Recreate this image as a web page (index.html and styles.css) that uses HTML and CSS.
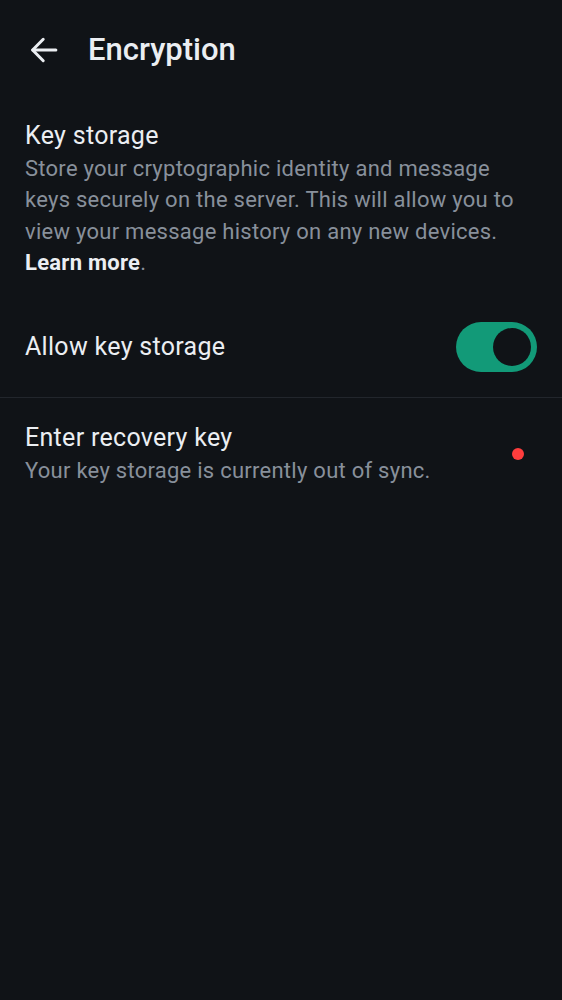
FILE: index.html
```html
<!DOCTYPE html>
<html lang="en">
<head>
<meta charset="utf-8">
<title>Encryption</title>
<link rel="stylesheet" href="styles.css">
</head>
<body>
<div class="screen">
  <header class="topbar">
    <button class="back" aria-label="Back">
      <svg width="38" height="38" viewBox="0 0 24 24" fill="none" stroke="currentColor" stroke-width="1.9" stroke-linecap="round" stroke-linejoin="round">
        <path d="M19.5 12H5"/>
        <path d="M11.5 5.2L4.8 12l6.7 6.8"/>
      </svg>
    </button>
    <h1 class="title">Encryption</h1>
  </header>

  <section class="intro">
    <h2 class="item-title">Key storage</h2>
    <p class="desc">Store your cryptographic identity and message keys securely on the server. This will allow you to view your message history on any new devices. <strong class="link">Learn more</strong>.</p>
  </section>

  <div class="row toggle-row">
    <span class="row-label">Allow key storage</span>
    <span class="switch"><span class="thumb"></span></span>
  </div>

  <div class="divider"></div>

  <div class="row recovery-row">
    <div class="row-text">
      <span class="item-title">Enter recovery key</span>
      <span class="desc">Your key storage is currently out of sync.</span>
    </div>
    <span class="dot"></span>
  </div>
</div>
</body>
</html>
```
FILE: styles.css
```css
html, body {
  margin: 0;
  padding: 0;
  background: #101317;
}
body {
  font-family: Roboto, "Noto Sans", sans-serif;
  color: #ebeef2;
}
.screen {
  width: 562px;
  min-height: 1000px;
  background: #101317;
}
.topbar {
  height: 100px;
  display: flex;
  align-items: center;
  padding-left: 25px;
  box-sizing: border-box;
}
.back {
  background: none;
  border: 0;
  padding: 0;
  width: 38px;
  height: 38px;
  color: #ebeef2;
  display: flex;
  align-items: center;
  justify-content: center;
}
.title {
  margin: 0 0 0 25px;
  font-size: 31px;
  font-weight: 500;
  line-height: 40px;
  color: #ebeef2;
}
.intro {
  padding: 19px 25px 0;
}
.item-title {
  display: block;
  margin: 0;
  font-size: 25px;
  font-weight: 400;
  line-height: 34px;
  letter-spacing: 0.3px;
  color: #ebeef2;
}
.desc {
  display: block;
  margin: 0;
  font-size: 22px;
  line-height: 31.3px;
  letter-spacing: 0.26px;
  color: #88909b;
}
.link {
  font-weight: 700;
  color: #ebeef2;
}
.row {
  display: flex;
  align-items: center;
  justify-content: space-between;
  padding: 0 25px;
}
.toggle-row {
  height: 101px;
  margin-top: 18px;
}
.row-label {
  font-size: 25px;
  line-height: 34px;
  letter-spacing: 0.3px;
}
.switch {
  width: 81px;
  height: 50px;
  border-radius: 25px;
  background: #129a78;
  display: flex;
  align-items: center;
  justify-content: flex-end;
  padding-right: 6px;
  box-sizing: border-box;
}
.thumb {
  width: 38px;
  height: 38px;
  border-radius: 50%;
  background: #101317;
}
.divider {
  height: 1px;
  background: #22262c;
}
.recovery-row {
  padding-top: 23px;
  padding-right: 38px;
}
.row-text {
  display: flex;
  flex-direction: column;
}
.dot {
  width: 12px;
  height: 12px;
  border-radius: 50%;
  background: #ff3d3d;
}
```
